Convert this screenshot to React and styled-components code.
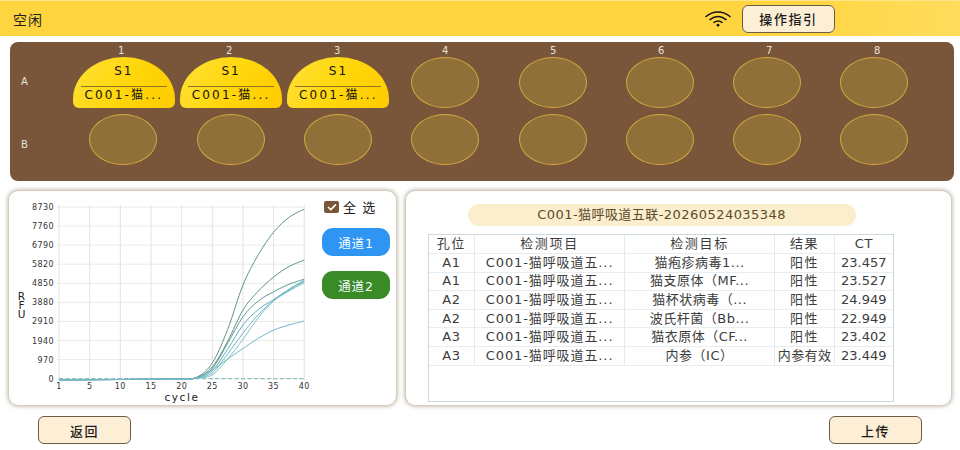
import React from "react";
import styled, { createGlobalStyle } from "styled-components";

const FONT = `"DejaVu Sans", "Noto Sans CJK SC", sans-serif`;

const GlobalStyle = createGlobalStyle`
  html, body {
    margin: 0;
    padding: 0;
    background: #fff;
    font-family: ${FONT};
  }
`;

const Page = styled.div`
  width: 960px;
  height: 450px;
  overflow: hidden;
  display: flex;
  flex-direction: column;
`;

const Header = styled.header`
  height: 36px;
  flex: none;
  display: flex;
  align-items: center;
  padding: 0 125px 0 13px;
  background: linear-gradient(90deg, #ffd53f 0%, #ffd53f 80%, #ffdc5c 100%);
  border-top: 1px solid #ffe48a;
  box-sizing: border-box;
`;

const Status = styled.span`
  flex: 1;
  font-size: 14px;
  letter-spacing: 1px;
  color: #222;
`;

const WifiIcon = styled.svg`
  width: 26px;
  height: 16px;
  margin-right: 11px;
`;

const ActionButton = styled.button`
  width: 93px;
  height: 28px;
  padding: 0;
  border: 1px solid #6a5c45;
  border-radius: 6px;
  background: #fdeed6;
  color: #1c1c1c;
  font-family: ${FONT};
  font-size: 13px;
  font-weight: 500;
  letter-spacing: 1.6px;
`;

const Plate = styled.section`
  flex: none;
  height: 139px;
  margin: 6px 6px 0 10px;
  border-radius: 8px;
  background: #79563a;
  display: grid;
  grid-template-columns: 59.7px repeat(8, 107.3px);
  grid-template-rows: 15px 51px 57px;
  align-items: center;
  color: #e9e2d8;
  font-size: 10px;
`;

const ColumnLabels = styled.div`
  grid-column: 2 / -1;
  display: grid;
  grid-template-columns: repeat(8, 108px);
  margin-left: -2.6px;
  padding-top: 2px;
  text-align: center;
`;

const RowLabel = styled.div`
  padding-left: 11px;
  margin-top: ${(props) => props.$top || 0}px;
  margin-bottom: ${(props) => props.$bottom || 0}px;
`;

const Well = styled.div`
  justify-self: center;
  align-self: end;
  width: 68px;
  height: 51px;
  box-sizing: border-box;
  border-radius: 50%;
  border: 1px solid #d6a93f;
  background: #8f7038;
`;

const FilledWell = styled.div`
  justify-self: center;
  width: 102px;
  height: 51px;
  margin-left: 1px;
  box-sizing: border-box;
  border-radius: 51px 51px 6px 6px / 42px 42px 6px 6px;
  background: linear-gradient(120deg, #ffe137 0%, #ffd60a 55%, #ffcb00 100%);
  color: #15120a;
  display: flex;
  flex-direction: column;
  align-items: center;
`;

const SampleName = styled.div`
  height: 30px;
  width: 86px;
  box-sizing: border-box;
  padding-top: 7px;
  text-align: center;
  font-size: 12px;
  letter-spacing: 2px;
  border-bottom: 1px solid #8d7420;
`;

const SampleProject = styled.div`
  font-size: 12px;
  line-height: 16px;
  letter-spacing: 2.2px;
  white-space: nowrap;
`;

const Cards = styled.div`
  flex: none;
  display: flex;
  gap: 10px;
  margin: 10px 9px 0 9px;
  height: 214px;
`;

const Card = styled.section`
  height: 214px;
  box-sizing: border-box;
  width: ${(props) => props.$width}px;
  border-radius: 9px;
  background: #fff;
  box-shadow: 0 0 4px 1px rgba(122, 92, 62, 0.55);
`;

const ChartCard = styled(Card)`
  display: flex;
`;

const ChartSvg = styled.svg`
  width: 313px;
  height: 214px;
  flex: none;
`;

const TickText = styled.text`
  font-family: ${FONT};
  font-size: 8px;
  letter-spacing: 0.4px;
  fill: #333;
`;

const AxisTitle = styled.text`
  font-family: ${FONT};
  font-size: 10.5px;
  letter-spacing: 1.6px;
  fill: #222;
`;

const VerticalTitle = styled.text`
  font-family: ${FONT};
  font-size: 10.5px;
  letter-spacing: -3px;
  writing-mode: vertical-rl;
  text-orientation: upright;
  fill: #222;
`;

const Side = styled.div`
  display: flex;
  flex-direction: column;
  gap: 15px;
  padding-top: 9px;
`;

const SelectAll = styled.label`
  display: flex;
  align-items: center;
  gap: 4px;
  height: 13px;
  padding-left: 2px;
  font-size: 13px;
  letter-spacing: 1px;
  color: #222;
`;

const CheckBox = styled.span`
  width: 15px;
  height: 12px;
  border-radius: 2px;
  background: #7a5636;
  display: flex;
  align-items: center;
  justify-content: center;
`;

const ChannelButton = styled.button`
  width: 68px;
  height: 28px;
  padding: 0;
  border: none;
  border-radius: 11px;
  background: ${(props) => props.$color};
  color: #f2fbff;
  font-family: ${FONT};
  font-size: 12.5px;
  letter-spacing: 0.8px;
`;

const ResultCard = styled(Card)`
  padding: 13px 0 0 22px;
`;

const Title = styled.div`
  width: 388px;
  height: 22px;
  margin-left: 40px;
  border-radius: 11px;
  background: #fbeecd;
  color: #5b4a2c;
  font-size: 13px;
  letter-spacing: 0.45px;
  line-height: 22px;
  text-align: center;
`;

const TableBox = styled.div`
  width: 466px;
  height: 168px;
  margin-top: 8px;
  box-sizing: border-box;
  border: 1px solid #cbd8e0;
`;

const Table = styled.table`
  width: 464px;
  table-layout: fixed;
  border-collapse: collapse;
  font-size: 13px;
  line-height: 16px;
  color: #3c3c3c;
`;

const Th = styled.th`
  box-sizing: border-box;
  width: ${(props) => props.$width}px;
  height: 18.6px;
  padding: 0;
  font-weight: 400;
  letter-spacing: ${(props) => props.$spacing}px;
  text-align: center;
  white-space: nowrap;
  border-right: 1px solid #e3e9ed;
  border-bottom: 1px solid #e8edf0;
  &:last-child {
    border-right: none;
  }
`;

const Td = styled.td`
  box-sizing: border-box;
  height: 18.6px;
  padding: 0;
  letter-spacing: ${(props) => props.$spacing}px;
  text-align: center;
  white-space: nowrap;
  overflow: hidden;
  border-right: 1px solid #e3e9ed;
  border-bottom: 1px solid #e8edf0;
  &:last-child {
    border-right: none;
  }
`;

const Footer = styled.footer`
  display: flex;
  justify-content: space-between;
  padding: 11px 38px 0 38px;
`;

const COLUMNS = [1, 2, 3, 4, 5, 6, 7, 8];
const FILLED = [1, 2, 3];

const RESULTS = [
  ["A1", "C001-猫呼吸道五...", "猫疱疹病毒1...", "阳性", "23.457"],
  ["A1", "C001-猫呼吸道五...", "猫支原体（MF...", "阳性", "23.527"],
  ["A2", "C001-猫呼吸道五...", "猫杯状病毒（...", "阳性", "24.949"],
  ["A2", "C001-猫呼吸道五...", "波氏杆菌（Bb...", "阳性", "22.949"],
  ["A3", "C001-猫呼吸道五...", "猫衣原体（CF...", "阳性", "23.402"],
  ["A3", "C001-猫呼吸道五...", "内参（IC）", "内参有效", "23.449"],
];

const HEADS = [
  ["孔位", 46, 1.7],
  ["检测项目", 150, 1.7],
  ["检测目标", 150, 1.7],
  ["结果", 60, 1.7],
  ["CT", 58, 0.5],
];

const CELL_SPACING = [0.6, 0.9, 0.5, 0.4, 0];

// plot area inside the chart svg
const LEFT = 50;
const PITCH = 6.13;
const TOP = 16;
const BOTTOM = 187.7;
const MAX = 8730;

const X_TICKS = [1, 5, 10, 15, 20, 25, 30, 35, 40];
const Y_TICKS = [0, 970, 1940, 2910, 3880, 4850, 5820, 6790, 7760, 8730];

const xOf = (c) => (c === 1 ? LEFT : LEFT + 30.7 + (c - 5) * PITCH);
const yOf = (v) => BOTTOM - (v / MAX) * (BOTTOM - TOP);

// rfu at cycles 20, 22.5, 25, 27.5, 30, 32.5, 35, 37.5, 40
const CYCLES = [20, 22.5, 25, 27.5, 30, 32.5, 35, 37.5, 40];
const CURVES = [
  { color: "#5f9488", pts: [-20, 80, 800, 2500, 4760, 6300, 7450, 8200, 8620] },
  { color: "#5f9488", pts: [-20, 60, 600, 1900, 3490, 4450, 5170, 5700, 6030] },
  { color: "#5a9a94", pts: [-20, 50, 520, 1800, 3150, 3950, 4420, 4800, 5060] },
  { color: "#62adb4", pts: [-20, 40, 420, 1500, 2730, 3520, 4020, 4550, 5000] },
  { color: "#6cb6c4", pts: [-20, 30, 300, 1250, 2320, 3250, 3980, 4500, 4950] },
  { color: "#7cc0cf", pts: [-20, 20, 200, 1000, 2000, 3100, 3950, 4450, 4880] },
  { color: "#74b6ca", pts: [-20, 40, 440, 1000, 1540, 2050, 2470, 2730, 2930] },
];

function smoothPath(pts) {
  const p = pts.map((v, i) => [xOf(CYCLES[i]), yOf(v)]);
  let d = `M${LEFT} ${BOTTOM + 1.2} L${p[0][0]} ${p[0][1]}`;
  for (let i = 0; i < p.length - 1; i++) {
    const a = p[i - 1] || p[i];
    const b = p[i];
    const c = p[i + 1];
    const e = p[i + 2] || c;
    d += ` C${b[0] + (c[0] - a[0]) / 6} ${b[1] + (c[1] - a[1]) / 6} ${c[0] - (e[0] - b[0]) / 6} ${c[1] - (e[1] - b[1]) / 6} ${c[0]} ${c[1]}`;
  }
  return d;
}

function Chart() {
  return (
    <ChartSvg viewBox="0 0 313 214">
      {Y_TICKS.map((v) => (
        <g key={v}>
          <line x1={LEFT - 2} x2={xOf(40)} y1={yOf(v)} y2={yOf(v)} stroke="#eaeae6" />
          <TickText x={LEFT - 5} y={yOf(v) + 3} textAnchor="end">
            {v}
          </TickText>
        </g>
      ))}
      {X_TICKS.map((c) => (
        <g key={c}>
          <line x1={xOf(c)} x2={xOf(c)} y1={TOP - 2} y2={BOTTOM + 2} stroke="#e2e2de" />
          <TickText x={xOf(c)} y={198} textAnchor="middle">
            {c}
          </TickText>
        </g>
      ))}
      <line
        x1={LEFT}
        x2={xOf(40)}
        y1={BOTTOM}
        y2={BOTTOM}
        stroke="#7db5b5"
        strokeDasharray="4 2.5"
      />
      {CURVES.map((curve, i) => (
        <path key={i} d={smoothPath(curve.pts)} fill="none" stroke={curve.color} strokeWidth="1" />
      ))}
      <AxisTitle x={173} y={210} textAnchor="middle">
        cycle
      </AxisTitle>
      <VerticalTitle x={12.5} y={99}>
        RFU
      </VerticalTitle>
    </ChartSvg>
  );
}

export default function App() {
  return (
    <Page>
      <GlobalStyle />
      <Header>
        <Status>空闲</Status>
        <WifiIcon viewBox="0 0 26 16" fill="none" stroke="#111" strokeWidth="1.5" strokeLinecap="round">
          <path d="M1 5.5C8 -0.5 18 -0.5 25 5.5" />
          <path d="M5 8.6C10 4.6 16 4.6 21 8.6" />
          <path d="M9 11.4C11.5 9.6 14.5 9.6 17 11.4" />
          <circle cx="13" cy="14.2" r="1.4" fill="#111" stroke="none" />
        </WifiIcon>
        <ActionButton>操作指引</ActionButton>
      </Header>

      <Plate>
        <div />
        <ColumnLabels>
          {COLUMNS.map((c) => (
            <div key={c}>{c}</div>
          ))}
        </ColumnLabels>
        <RowLabel $bottom={3}>A</RowLabel>
        {COLUMNS.map((c) =>
          FILLED.includes(c) ? (
            <FilledWell key={c}>
              <SampleName>S1</SampleName>
              <SampleProject>C001-猫...</SampleProject>
            </FilledWell>
          ) : (
            <Well key={c} />
          )
        )}
        <RowLabel $top={15}>B</RowLabel>
        {COLUMNS.map((c) => (
          <Well key={c} />
        ))}
      </Plate>

      <Cards>
        <ChartCard $width={387}>
          <Chart />
          <Side>
            <SelectAll>
              <CheckBox>
                <svg width="10" height="8" viewBox="0 0 10 8" fill="none">
                  <path d="M1 4L3.8 6.6L9 1.4" stroke="#fff" strokeWidth="1.6" />
                </svg>
              </CheckBox>
              全 选
            </SelectAll>
            <ChannelButton $color="#2f95f2">通道1</ChannelButton>
            <ChannelButton $color="#3a8a27">通道2</ChannelButton>
          </Side>
        </ChartCard>

        <ResultCard $width={546}>
          <Title>C001-猫呼吸道五联-20260524035348</Title>
          <TableBox>
            <Table>
              <thead>
                <tr>
                  {HEADS.map(([label, width, spacing]) => (
                    <Th key={label} $width={width} $spacing={spacing}>
                      {label}
                    </Th>
                  ))}
                </tr>
              </thead>
              <tbody>
                {RESULTS.map((row, index) => (
                  <tr key={index}>
                    {row.map((cell, i) => (
                      <Td key={i} $spacing={i === 3 && cell === "阳性" ? 1.7 : CELL_SPACING[i]}>
                        {cell}
                      </Td>
                    ))}
                  </tr>
                ))}
              </tbody>
            </Table>
          </TableBox>
        </ResultCard>
      </Cards>

      <Footer>
        <ActionButton>返回</ActionButton>
        <ActionButton>上传</ActionButton>
      </Footer>
    </Page>
  );
}
